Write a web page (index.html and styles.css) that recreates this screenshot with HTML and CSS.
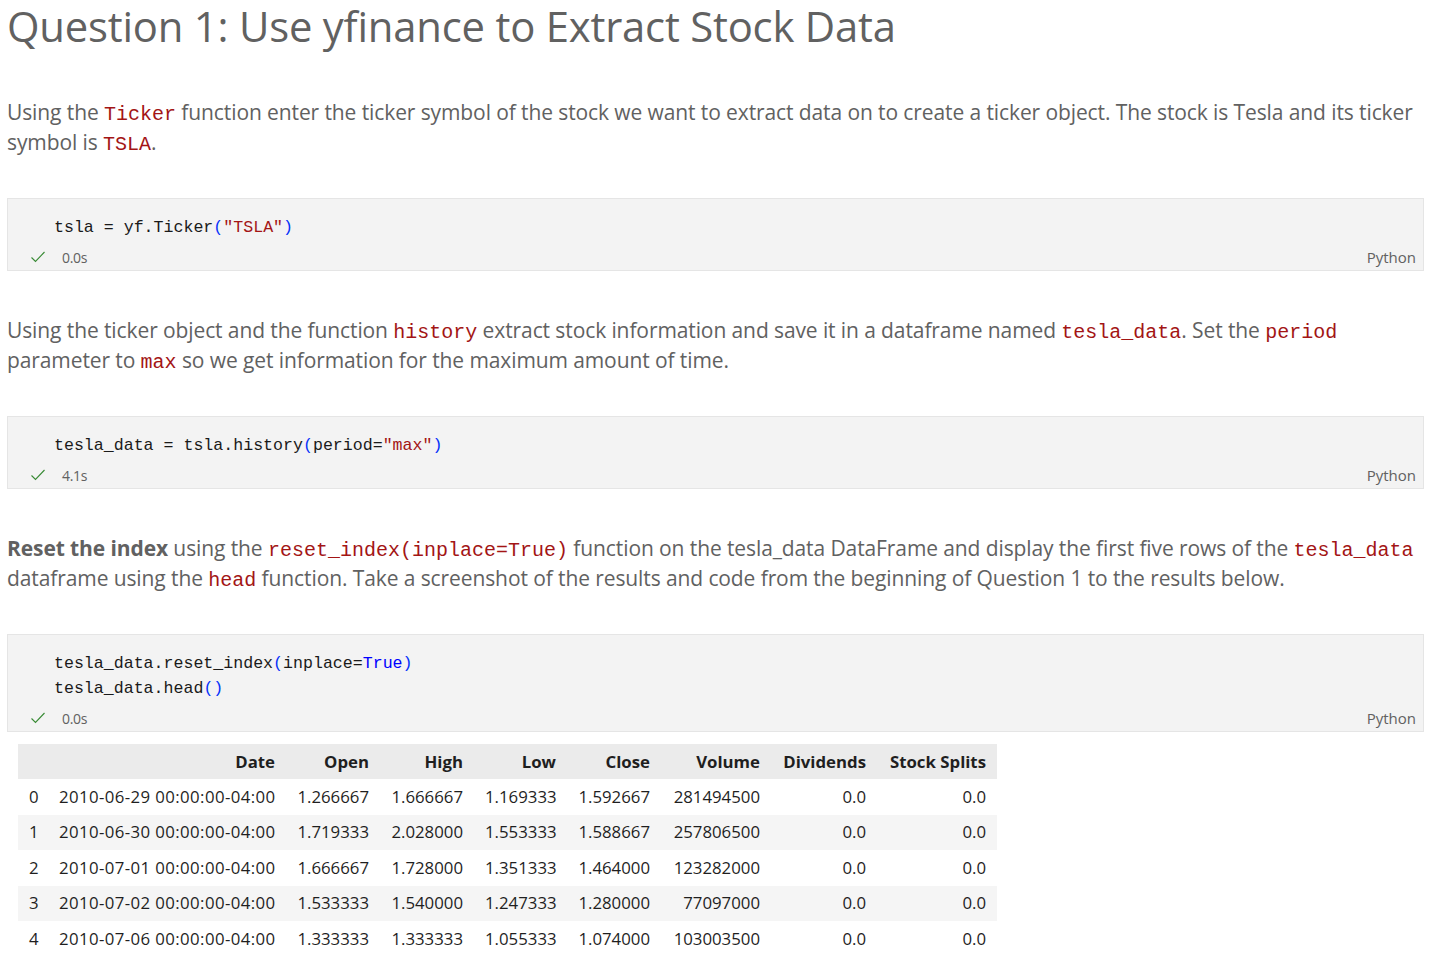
FILE: index.html
```html
<!DOCTYPE html>
<html>
<head>
<meta charset="utf-8">
<link rel="stylesheet" href="styles.css">
</head>
<body>
<div class="notebook">
  <h1 class="title">Question 1: Use yfinance to Extract Stock Data</h1>

  <p class="md">Using the <code>Ticker</code> function enter the ticker symbol of the stock we want to extract data on to create a ticker object. The stock is Tesla and its ticker symbol is <code>TSLA</code>.</p>

  <div class="cell">
    <div class="code"><div class="line">tsla = yf.Ticker<span class="br">(</span><span class="str">"TSLA"</span><span class="br">)</span></div></div>
    <div class="status">
      <svg class="check" width="16" height="14" viewBox="0 0 16 14"><path d="M1.5 7.5 L5.5 11.5 L14.5 2" fill="none" stroke="#388a34" stroke-width="1.1"/></svg>
      <span class="time">0.0s</span>
      <span class="lang">Python</span>
    </div>
  </div>

  <p class="md">Using the ticker object and the function <code>history</code> extract stock information and save it in a dataframe named <code>tesla_data</code>. Set the <code>period</code> parameter to <code>max</code> so we get information for the maximum amount of time.</p>

  <div class="cell">
    <div class="code"><div class="line">tesla_data = tsla.history<span class="br">(</span>period=<span class="str">"max"</span><span class="br">)</span></div></div>
    <div class="status">
      <svg class="check" width="16" height="14" viewBox="0 0 16 14"><path d="M1.5 7.5 L5.5 11.5 L14.5 2" fill="none" stroke="#388a34" stroke-width="1.1"/></svg>
      <span class="time">4.1s</span>
      <span class="lang">Python</span>
    </div>
  </div>

  <p class="md"><strong>Reset the index</strong> using the <code>reset_index(inplace=True)</code> function on the tesla_data DataFrame and display the first five rows of the <code>tesla_data</code> dataframe using the <code>head</code> function. Take a screenshot of the results and code from the beginning of Question 1 to the results below.</p>

  <div class="cell">
    <div class="code multi">
      <div class="line">tesla_data.reset_index<span class="br">(</span>inplace=<span class="kw">True</span><span class="br">)</span></div>
      <div class="line">tesla_data.head<span class="br">()</span></div>
    </div>
    <div class="status">
      <svg class="check" width="16" height="14" viewBox="0 0 16 14"><path d="M1.5 7.5 L5.5 11.5 L14.5 2" fill="none" stroke="#388a34" stroke-width="1.1"/></svg>
      <span class="time">0.0s</span>
      <span class="lang">Python</span>
    </div>
  </div>

  <div class="output">
    <table class="df">
      <colgroup>
        <col class="c-idx"><col class="c-date"><col class="c-num"><col class="c-num"><col class="c-low"><col class="c-num"><col class="c-vol"><col class="c-div"><col class="c-split">
      </colgroup>
      <thead>
        <tr><th></th><th>Date</th><th>Open</th><th>High</th><th>Low</th><th>Close</th><th>Volume</th><th>Dividends</th><th>Stock Splits</th></tr>
      </thead>
      <tbody>
        <tr><td class="idx">0</td><td class="date">2010-06-29 00:00:00-04:00</td><td>1.266667</td><td>1.666667</td><td>1.169333</td><td>1.592667</td><td>281494500</td><td>0.0</td><td>0.0</td></tr>
        <tr><td class="idx">1</td><td class="date">2010-06-30 00:00:00-04:00</td><td>1.719333</td><td>2.028000</td><td>1.553333</td><td>1.588667</td><td>257806500</td><td>0.0</td><td>0.0</td></tr>
        <tr><td class="idx">2</td><td class="date">2010-07-01 00:00:00-04:00</td><td>1.666667</td><td>1.728000</td><td>1.351333</td><td>1.464000</td><td>123282000</td><td>0.0</td><td>0.0</td></tr>
        <tr><td class="idx">3</td><td class="date">2010-07-02 00:00:00-04:00</td><td>1.533333</td><td>1.540000</td><td>1.247333</td><td>1.280000</td><td>77097000</td><td>0.0</td><td>0.0</td></tr>
        <tr><td class="idx">4</td><td class="date">2010-07-06 00:00:00-04:00</td><td>1.333333</td><td>1.333333</td><td>1.055333</td><td>1.074000</td><td>103003500</td><td>0.0</td><td>0.0</td></tr>
      </tbody>
    </table>
  </div>
</div>
</body>
</html>
```

FILE: styles.css
```css
html, body {
  margin: 0;
  padding: 0;
  background: #ffffff;
}

.notebook {
  padding: 0 10px 0 7px;
  font-family: "Open Sans", "Noto Sans", sans-serif;
  color: #616161;
}

.title {
  margin: 0 0 45px 0;
  font-size: 41.8px;
  font-weight: 400;
  line-height: 52px;
  color: #616161;
  letter-spacing: -0.2px;
}

.md {
  margin: 0;
  font-size: 21px;
  line-height: 30px;
  color: #616161;
  letter-spacing: -0.1px;
}

.md code {
  font-family: "Liberation Mono", "DejaVu Sans Mono", monospace;
  font-size: 20px;
  line-height: 1;
  color: #a31515;
  letter-spacing: 0;
}

.md strong {
  font-weight: 700;
}

.cell {
  margin: 41px 0 44px 0;
  background: #f3f3f3;
  border: 1px solid #e5e5e5;
  padding: 17px 7px 3px 0;
}

.cell + .output {
  margin-top: -32px;
}

.code {
  padding-left: 46px;
  font-family: "Liberation Mono", "DejaVu Sans Mono", monospace;
  font-size: 16.6px;
  line-height: 24px;
  color: #1a1a1a;
}

.code.multi {
  line-height: 24.5px;
}

.line {
  white-space: pre;
}

.br {
  color: #0431fa;
}

.str {
  color: #a31515;
}

.kw {
  color: #0000ff;
}

.status {
  display: flex;
  align-items: center;
  height: 20px;
  margin-top: 7px;
  font-size: 14px;
  color: #616161;
}

.check {
  margin-left: 22px;
  flex: none;
}

.time {
  margin-left: 16px;
  letter-spacing: -0.3px;
}

.lang {
  margin-left: auto;
  font-size: 15px;
}

.output {
  padding-left: 11px;
}

.df {
  border-collapse: collapse;
  table-layout: fixed;
  width: 979px;
  font-size: 16.8px;
  color: #1f1f1f;
}

.c-idx { width: 30px; }
.c-date { width: 238px; }
.c-num { width: 94px; }
.c-low { width: 93px; }
.c-vol { width: 110px; }
.c-div { width: 106px; }
.c-split { width: 120px; }

.df th, .df td {
  text-align: right;
  white-space: nowrap;
}

.df th {
  font-weight: 700;
  background: #ebebeb;
  color: #1f1f1f;
  padding: 0 11px;
  height: 35px;
}

.df td {
  padding: 0 11px 1px 11px;
  height: 34.5px;
}

.df td.idx {
  text-align: left;
}

.df td.date {
  letter-spacing: 0.4px;
}

.df tbody tr:nth-child(even) {
  background: #f5f5f5;
}
```
